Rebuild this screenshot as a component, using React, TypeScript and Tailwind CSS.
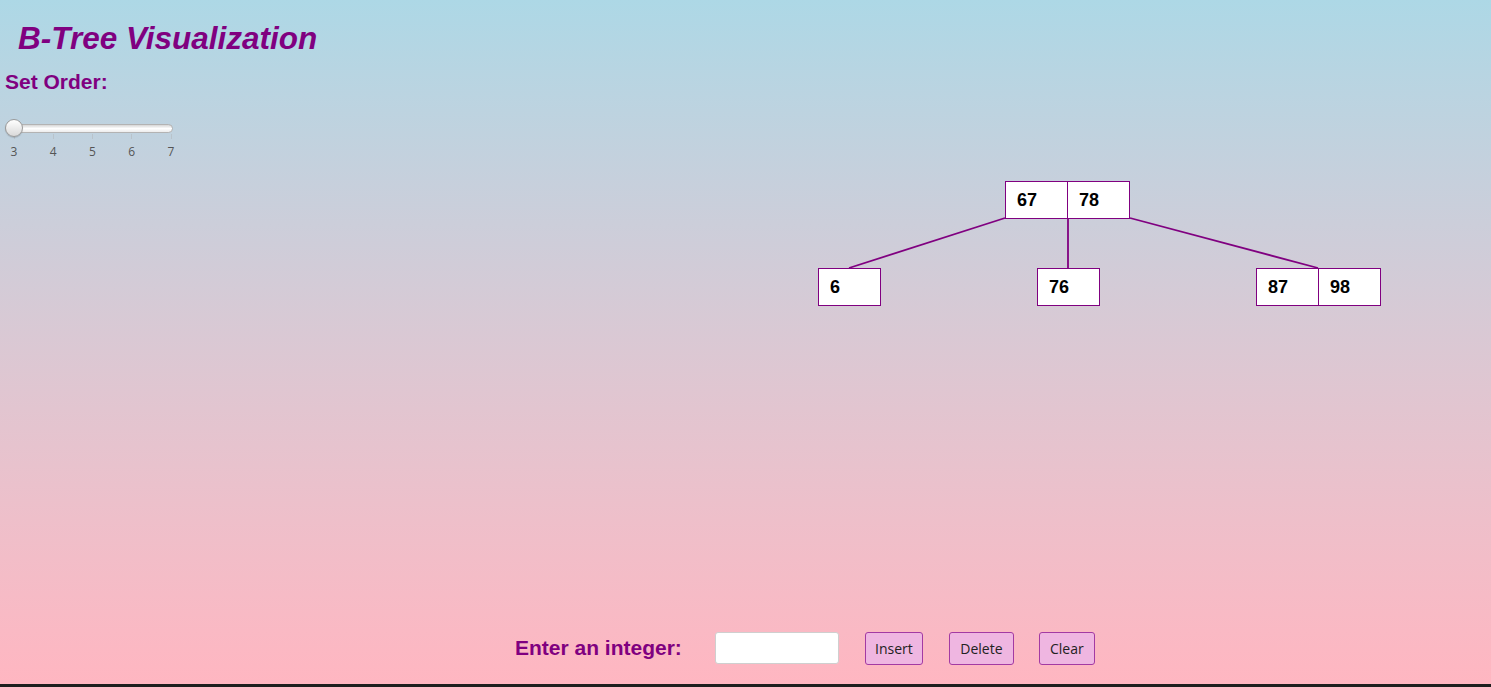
import React, { useState } from "react";

type TreeNode = {
  keys: number[];
  x: number; // left edge in canvas
  y: number; // top edge in canvas
};

const nodes: TreeNode[] = [
  { keys: [67, 78], x: 1005, y: 11 },
  { keys: [6], x: 818, y: 98 },
  { keys: [76], x: 1037, y: 98 },
  { keys: [87, 98], x: 1256, y: 98 },
];

const edges = [
  { x1: 1005, y1: 48, x2: 849, y2: 98 },
  { x1: 1068, y1: 48, x2: 1068, y2: 98 },
  { x1: 1130, y1: 48, x2: 1318, y2: 98 },
];

const ticks = [3, 4, 5, 6, 7];

function OrderSlider() {
  return (
    <div className="relative ml-[5px] h-[44px] w-[180px] font-['Open_Sans',sans-serif]">
      {/* track */}
      <div className="absolute left-0 top-[5px] h-[9px] w-[168px] rounded-full border border-[#b3b3b3] bg-linear-to-b from-[#d6d6d6] via-white to-[#ececec]" />
      {/* ticks + labels */}
      {ticks.map((t, i) => (
        <div
          key={t}
          className="absolute top-[15px] flex w-[20px] -translate-x-1/2 flex-col items-center"
          style={{ left: 9 + i * 39.25 }}
        >
          <div className="h-[5px] w-px bg-[#b9c3cb]" />
          <span className="mt-[7px] text-[12px] leading-none text-[#555]">{t}</span>
        </div>
      ))}
      {/* thumb */}
      <div className="absolute left-0 top-0 h-[18px] w-[18px] rounded-full border border-[#9a9a9a] bg-linear-to-b from-white to-[#d9d9d9] shadow-[0_1px_1px_rgba(0,0,0,0.15)]" />
    </div>
  );
}

function NodeBox({ node }: { node: TreeNode }) {
  return (
    <div className="absolute flex" style={{ left: node.x, top: node.y }}>
      {node.keys.map((k, i) => (
        <div
          key={k}
          className={`flex h-[38px] w-[63px] items-center border border-[#800080] bg-white pl-[11px] text-[18px] font-bold text-black ${
            i > 0 ? "-ml-px" : ""
          }`}
        >
          {k}
        </div>
      ))}
    </div>
  );
}

export default function App() {
  const [value, setValue] = useState("");

  return (
    <div className="flex h-[687px] w-full flex-col font-['Liberation_Sans',Arial,sans-serif]">
      <div className="flex h-[684px] flex-col bg-linear-to-b from-[#add8e6] to-[#ffb6c1]">
        {/* header */}
        <div className="flex h-[170px] flex-col">
          <h1 className="ml-[18px] mt-[23px] text-[31.5px] font-bold italic leading-none text-[#800080]">
            B-Tree Visualization
          </h1>
          <div className="ml-[5px] mt-[16px] text-[21px] font-bold leading-none text-[#800080]">
            Set Order:
          </div>
          <div className="mt-[27px]">
            <OrderSlider />
          </div>
        </div>

        {/* tree canvas */}
        <div className="relative flex-1">
          <svg className="absolute inset-0 h-full w-full" xmlns="http://www.w3.org/2000/svg">
            {edges.map((e, i) => (
              <line key={i} x1={e.x1} y1={e.y1} x2={e.x2} y2={e.y2} stroke="#800080" strokeWidth={1.8} />
            ))}
          </svg>
          {nodes.map((n, i) => (
            <NodeBox key={i} node={n} />
          ))}
        </div>

        {/* controls */}
        <div className="flex h-[72px] items-center pl-[515px] font-['Open_Sans',sans-serif]">
          <span className="font-['Liberation_Sans',Arial,sans-serif] text-[21px] font-bold text-[#800080]">
            Enter an integer:
          </span>
          <input
            value={value}
            onChange={(e) => setValue(e.target.value)}
            className="ml-[33px] h-[32px] w-[124px] rounded-[3px] border border-[#cfcfcf] bg-white px-2 text-[14px] outline-none"
          />
          <button className="ml-[26px] h-[33px] w-[58px] rounded-[3px] border border-[#a33aa3] bg-[#efb6e1] text-[14px] text-[#222]">
            Insert
          </button>
          <button className="ml-[26px] h-[33px] w-[65px] rounded-[3px] border border-[#a33aa3] bg-[#efb6e1] text-[14px] text-[#222]">
            Delete
          </button>
          <button className="ml-[25px] h-[33px] w-[56px] rounded-[3px] border border-[#a33aa3] bg-[#efb6e1] text-[14px] text-[#222]">
            Clear
          </button>
        </div>
      </div>
      <div className="h-[3px] bg-[#1e1e1e]" />
    </div>
  );
}
